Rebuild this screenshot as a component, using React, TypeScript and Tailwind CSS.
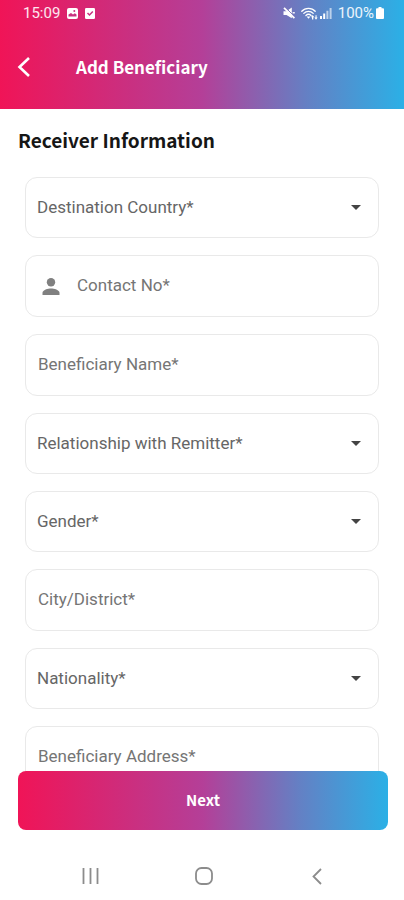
import { useState } from "react";
import type { ReactNode } from "react";

interface FieldProps {
    id: string;
    label: string;
}

const relationships = ["Parent", "Sibling", "Spouse", "Friend"];
const countries = ["India", "Nepal", "Philippines", "Vietnam"];
const genders = ["Male", "Female", "Other"];

function SelectField({ id, label, options }: FieldProps & { options: string[] }) {
    const [value, setValue] = useState("");

    return (
        <div className="relative">
            <select
                id={id}
                aria-label={label}
                value={value}
                onChange={(e) => setValue(e.target.value)}
                className="block h-[61px] w-full appearance-none rounded-xl border border-[#e9e9e9] bg-white px-[11px] text-[17px] text-[#666666] outline-none"
            >
                <option value="">{label}</option>
                {options.map((option) => (
                    <option key={option}>{option}</option>
                ))}
            </select>
            <svg
                viewBox="0 0 10 5"
                className="pointer-events-none absolute top-7 right-[18px] h-[5px] w-[10px] fill-[#444444]"
            >
                <path d="M0 0h10L5 5z" />
            </svg>
        </div>
    );
}

function TextField({ id, label, icon }: FieldProps & { icon?: ReactNode }) {
    return (
        <label
            htmlFor={id}
            className="flex h-[62px] shrink-0 items-center rounded-xl border border-[#e9e9e9] bg-white px-3"
        >
            {icon}
            <input
                id={id}
                type="text"
                placeholder={label}
                aria-label={label}
                className="w-full min-w-0 bg-transparent text-[17px] text-[#666666] outline-none placeholder:text-[#757575]"
            />
        </label>
    );
}

function StatusBar() {
    return (
        <div className="flex h-[26px] items-center justify-between pr-5 pl-[23px] text-[15px] leading-5 text-white/90">
            <div className="flex items-center gap-[7px]">
                <span>15:09</span>
                {/* Gallery */}
                <svg viewBox="0 0 11 11" className="h-[11px] w-[11px]">
                    <rect width="11" height="11" rx="2" fill="#fff" />
                    <path d="M1.5 8.5V6.5L4 5l2 1.5 1.8-1.3 1.7 1.3v2z" fill="#c93180" />
                    <circle cx="7.3" cy="3" r="1" fill="#c93180" />
                </svg>
                {/* Task done */}
                <svg viewBox="0 0 10 11" className="h-[11px] w-[10px]">
                    <rect width="10" height="11" rx="1.2" fill="#fff" />
                    <path d="M2.5 5l2 2 3.3-3.5" fill="none" stroke="#c93180" strokeWidth="1.5" />
                </svg>
            </div>
            <div className="flex items-center">
                {/* Muted */}
                <svg viewBox="0 0 12 12" className="mr-[6px] h-3 w-3">
                    <path d="M0.5 4.2h3L8.8 0.6v10.6L3.5 8H0.5z" fill="#fff" />
                    <path d="M2.6 0.6L12 10" stroke="#7a72b8" strokeWidth="1" />
                    <path d="M1 0.8L11.4 11.2" stroke="#fff" strokeWidth="1.7" />
                    <path d="M9.6 5.8h2.2" stroke="#fff" strokeWidth="1.4" />
                </svg>
                {/* Wifi */}
                <svg viewBox="0 0 17 13" className="mr-[2px] h-[13px] w-[17px]">
                    <g fill="none" stroke="#fff" strokeWidth="1.3" strokeLinecap="round">
                        <path d="M0.8 4.2C4.3 0.4 10.7 0.4 14.2 4.2" />
                        <path d="M2.8 6.4c2.6-2.6 6.8-2.6 9.4 0" />
                        <path d="M4.9 8.5c1.5-1.4 3.7-1.4 5.2 0" />
                    </g>
                    <path d="M5.6 9.6h3.8L7.5 11.8z" fill="#fff" />
                    <path d="M11.6 8l1.7 2.3H12.3V12.6H11V10.3H10zM15 12.8l-1.5-2.2h1V8.2h1.1v2.4h1z" fill="#fff" />
                </svg>
                {/* Signal */}
                <svg viewBox="0 0 12 12" className="mr-[6px] h-3 w-3">
                    <path d="M0 9h2v3H0zM3.2 6.5h2V12h-2z" fill="#fff" />
                    <path d="M6.4 3.8h2V12h-2zM9.6 1h2v11h-2z" fill="#fff" opacity="0.6" />
                </svg>
                <span>100%</span>
                <svg viewBox="0 0 8 12" className="ml-[2px] h-3 w-2">
                    <path d="M2.5 0h3v1.3H7q1 0 1 1V11q0 1-1 1H1q-1 0-1-1V2.3q0-1 1-1h1.5z" fill="#fff" />
                </svg>
            </div>
        </div>
    );
}

export default function App() {
    return (
        <div className="flex h-dvh flex-col bg-white font-['Roboto',sans-serif]">
            <header className="h-[109px] shrink-0 bg-[linear-gradient(to_right,#f01457,#b43f98_50%,#6480c4_76%,#2bb0e6)]">
                <StatusBar />
                <div className="flex h-[82px] items-center pl-[17px] text-white">
                    <button type="button" aria-label="Back" className="flex h-10 w-[59px] items-center">
                        <svg viewBox="0 0 14 22" className="h-[22px] w-[14px]">
                            <path d="M12 2L2.5 11l9.5 9" fill="none" stroke="currentColor" strokeWidth="2.6" />
                        </svg>
                    </button>
                    <h1 className="font-['Noto_Sans_CJK_SC',sans-serif] text-[17px] font-bold">Add Beneficiary</h1>
                </div>
            </header>

            <main className="min-h-0 flex-1 overflow-y-auto px-[18px] [scrollbar-width:none]">
                <h2 className="pt-[17px] pb-[23px] font-['Noto_Sans_CJK_SC',sans-serif] text-[19px] leading-7 font-bold text-[#161616]">
                    Receiver Information
                </h2>
                <form id="beneficiary" className="flex flex-col gap-[17px] px-[7px] pb-5">
                    <SelectField id="country" label="Destination Country*" options={countries} />
                    <TextField
                        id="contact"
                        label="Contact No*"
                        icon={
                            <svg viewBox="0 0 18 17" className="mr-[17px] ml-1 h-[17px] w-[18px] shrink-0 fill-[#808080]">
                                <circle cx="9" cy="4.2" r="4.2" />
                                <path d="M0.5 17v-2.3C0.5 11.8 6 10.4 9 10.4s8.5 1.4 8.5 4.3V17z" />
                            </svg>
                        }
                    />
                    <TextField id="name" label="Beneficiary Name*" />
                    <SelectField id="relationship" label="Relationship with Remitter*" options={relationships} />
                    <SelectField id="gender" label="Gender*" options={genders} />
                    <TextField id="city" label="City/District*" />
                    <SelectField id="nationality" label="Nationality*" options={countries} />
                    <TextField id="address" label="Beneficiary Address*" />
                </form>
            </main>

            <div className="shrink-0 pr-4 pl-[18px]">
                <button
                    type="submit"
                    form="beneficiary"
                    className="block h-[59px] w-full rounded-lg bg-[linear-gradient(to_right,#f01457,#b43f98_50%,#6480c4_76%,#2bb0e6)] font-['Noto_Sans_CJK_SC',sans-serif] text-[15px] font-bold text-white"
                >
                    Next
                </button>
            </div>

            <nav className="grid h-[70px] shrink-0 grid-cols-3 items-center pt-[22px] pr-[30px] pl-[34px] text-[#8c8c8c]">
                <button type="button" aria-label="Recent apps" className="flex justify-center">
                    <svg viewBox="0 0 17 16" className="h-4 w-[17px]">
                        <path d="M1.5 0v16M8.5 0v16M15.5 0v16" stroke="currentColor" strokeWidth="1.8" />
                    </svg>
                </button>
                <button type="button" aria-label="Home" className="flex justify-center">
                    <svg viewBox="0 0 18 18" className="h-[18px] w-[18px]">
                        <rect x="1" y="1" width="16" height="16" rx="5.5" fill="none" stroke="currentColor" strokeWidth="1.8" />
                    </svg>
                </button>
                <button type="button" aria-label="Back to previous screen" className="flex justify-center">
                    <svg viewBox="0 0 10 17" className="h-[17px] w-[10px]">
                        <path d="M9 1L1.5 8.5 9 16" fill="none" stroke="currentColor" strokeWidth="1.8" />
                    </svg>
                </button>
            </nav>
        </div>
    );
}
